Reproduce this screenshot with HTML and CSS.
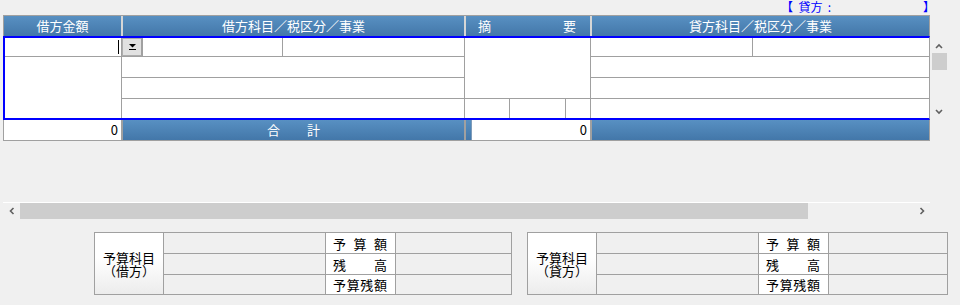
FILE: index.html
```html
<!DOCTYPE html>
<html lang="ja">
<head>
    <meta charset="UTF-8">
    <title>仕訳入力</title>
    <link rel="stylesheet" href="styles.css">
</head>
<body>

    <div class="note">
        <div class="note-in"><span>【&nbsp;&nbsp;貸方&nbsp;&nbsp;:</span><span>】</span></div>
    </div>

    <div class="sheet">
        <div class="head">
            <div class="hc">借方金額</div>
            <div class="hc">借方科目／税区分／事業</div>
            <div class="hc hc-spread"><span>摘</span><span>要</span></div>
            <div class="hc">貸方科目／税区分／事業</div>
        </div>

        <div class="body-row">
            <div class="lines">
                <div class="cell amt-input"><span class="caret"></span></div>
                <div class="cell amt-rest"></div>

                <div class="cell split dr-first">
                    <button class="drop">
                        <svg width="9" height="8" viewBox="0 0 9 8"><path d="M1 1h7L4.5 4.5z" fill="#000"/><rect x="1" y="6" width="7" height="1" fill="#000"/></svg>
                    </button>
                    <div class="cell dr-code"></div>
                    <div class="cell dr-tax"></div>
                </div>
                <div class="cell dr-r2"></div>
                <div class="cell dr-r3"></div>
                <div class="cell dr-r4"></div>

                <div class="cell memo"></div>
                <div class="cell split memo-foot">
                    <div class="cell w44"></div>
                    <div class="cell w55"></div>
                    <div class="cell w24"></div>
                </div>

                <div class="cell split cr-first">
                    <div class="cell cr-code"></div>
                    <div class="cell cr-tax"></div>
                </div>
                <div class="cell cr-r2"></div>
                <div class="cell cr-r3"></div>
                <div class="cell cr-r4"></div>
            </div>

            <div class="vscroll">
                <svg class="arrow" width="8" height="6" viewBox="0 0 8 6"><path d="M1 5L4 2L7 5" fill="none" stroke="#606060" stroke-width="1.6"/></svg>
                <div class="vthumb"></div>
                <div class="vspace"></div>
                <svg class="arrow" width="8" height="6" viewBox="0 0 8 6"><path d="M1 1L4 4L7 1" fill="none" stroke="#606060" stroke-width="1.6"/></svg>
            </div>
        </div>

        <div class="total">
            <div class="tc amount">0</div>
            <div class="tc band band-spread"><span>合</span><span>計</span></div>
            <div class="tc band"><div class="amount amount-box">0</div></div>
            <div class="tc band"></div>
        </div>
    </div>

    <div class="hscroll">
        <div class="harrow">
            <svg width="6" height="8" viewBox="0 0 6 8"><path d="M4.5 1L1.5 4L4.5 7" fill="none" stroke="#606060" stroke-width="1.6"/></svg>
        </div>
        <div class="hthumb"></div>
        <div class="hspace"></div>
        <div class="harrow">
            <svg width="6" height="8" viewBox="0 0 6 8"><path d="M1.5 1L4.5 4L1.5 7" fill="none" stroke="#606060" stroke-width="1.6"/></svg>
        </div>
    </div>

    <div class="budget">
        <div class="panel panel-dr">
            <div class="p-title"><div>予算科目</div><div>（借方）</div></div>
            <div class="p-val"></div>
            <div class="p-label"><span>予</span><span>算</span><span>額</span></div>
            <div class="p-val"></div>
            <div class="p-val"></div>
            <div class="p-label"><span>残</span><span>高</span></div>
            <div class="p-val"></div>
            <div class="p-val"></div>
            <div class="p-label"><span>予</span><span>算</span><span>残</span><span>額</span></div>
            <div class="p-val"></div>
        </div>
        <div class="panel panel-cr">
            <div class="p-title"><div>予算科目</div><div>（貸方）</div></div>
            <div class="p-val"></div>
            <div class="p-label"><span>予</span><span>算</span><span>額</span></div>
            <div class="p-val"></div>
            <div class="p-val"></div>
            <div class="p-label"><span>残</span><span>高</span></div>
            <div class="p-val"></div>
            <div class="p-val"></div>
            <div class="p-label"><span>予</span><span>算</span><span>残</span><span>額</span></div>
            <div class="p-val"></div>
        </div>
    </div>

</body>
</html>
```

FILE: styles.css
```css
* {
    box-sizing: border-box;
}

body {
    margin: 0;
    background-color: #f0f0f0;
    font-family: "Noto Sans CJK JP", "DejaVu Sans", sans-serif;
    font-size: 13px;
    color: #000;
}

/* top note */
.note {
    display: flex;
    height: 15px;
}

.note-in {
    display: flex;
    justify-content: space-between;
    width: 154px;
    height: 14px;
    margin-left: 781px;
    line-height: 13px;
    font-size: 12px;
    color: #0000ff;
}

/* grid */
.sheet {
    margin-left: 3px;
}

.head {
    display: grid;
    grid-template-columns: 117px 341px 124px 337px;
    column-gap: 2px;
    width: 927px;
    height: 21px;
    border: 1px solid #a0a0a0;
    border-bottom: none;
    background-color: #d6d6d6;
}

.hc {
    background: linear-gradient(#5890c2, #4377a9);
    color: #fff;
    text-align: center;
    line-height: 20px;
    white-space: nowrap;
}

.hc-spread {
    display: flex;
    justify-content: space-between;
    padding: 0 14px 0 12px;
}

.body-row {
    display: flex;
}

.lines {
    display: grid;
    grid-template-columns: 116px 342px 125px 338px;
    grid-template-rows: 18px 20px 20px 19px;
    gap: 1px;
    width: 927px;
    height: 84px;
    background-color: #a0a0a0;
    border-top: 2px solid #0000ff;
    border-bottom: 2px solid #0000ff;
    border-left: 2px solid #0000ff;
    border-right: 1px solid #a0a0a0;
}

.cell {
    background-color: #fff;
}

.amt-input {
    grid-column: 1;
    grid-row: 1;
    display: flex;
    justify-content: flex-end;
    align-items: center;
    padding-right: 2px;
}

.caret {
    width: 1px;
    height: 14px;
    background-color: #000;
}

.amt-rest {
    grid-column: 1;
    grid-row: 2 / 5;
}

.split {
    display: flex;
    gap: 1px;
    background-color: #a0a0a0;
}

.dr-first { grid-column: 2; grid-row: 1; }
.dr-r2 { grid-column: 2; grid-row: 2; }
.dr-r3 { grid-column: 2; grid-row: 3; }
.dr-r4 { grid-column: 2; grid-row: 4; }

.drop {
    width: 20px;
    padding: 0;
    border: 1px solid #adadad;
    border-right-color: #a0a0a0;
    background-color: #e1e1e1;
    display: flex;
    align-items: center;
    justify-content: center;
}

.dr-code {
    width: 139px;
}

.dr-tax {
    flex: 1;
}

.memo {
    grid-column: 3;
    grid-row: 1 / 4;
}

.memo-foot {
    grid-column: 3;
    grid-row: 4;
}

.w44 { width: 44px; }
.w55 { width: 55px; }
.w24 { flex: 1; }

.cr-first { grid-column: 4; grid-row: 1; }
.cr-r2 { grid-column: 4; grid-row: 2; }
.cr-r3 { grid-column: 4; grid-row: 3; }
.cr-r4 { grid-column: 4; grid-row: 4; }

.cr-code {
    width: 161px;
}

.cr-tax {
    flex: 1;
}

/* vertical scrollbar */
.vscroll {
    width: 17px;
    display: flex;
    flex-direction: column;
    align-items: center;
    padding-top: 7px;
}

.vscroll .arrow {
    display: block;
    margin-left: 1px;
}

.vthumb {
    width: 15px;
    height: 17px;
    margin-top: 4px;
    margin-left: 1px;
    background-color: #cdcdcd;
}

.vspace {
    height: 39px;
}

/* total row */
.total {
    display: grid;
    grid-template-columns: 117px 341px 124px 337px;
    column-gap: 2px;
    width: 927px;
    height: 21px;
    border: 1px solid #a0a0a0;
    border-top: none;
    background-color: #a0a0a0;
}

.tc {
    line-height: 20px;
}

.amount {
    background-color: #fff;
    text-align: right;
    padding-right: 3px;
}

.band {
    background: linear-gradient(#5890c2, #4377a9);
    color: #fff;
    padding-left: 5px;
}

.band-spread {
    display: flex;
    justify-content: center;
    gap: 27px;
    padding-left: 0;
}

.amount-box {
    height: 20px;
    color: #000;
    border-left: 1px solid #7f9cba;
}

/* horizontal scrollbar */
.hscroll {
    display: flex;
    width: 927px;
    height: 17px;
    margin: 61px 0 0 3px;
    border-top: 1px solid #fff;
}

.harrow {
    width: 17px;
    display: flex;
    align-items: center;
    justify-content: center;
}

.hthumb {
    width: 788px;
    background-color: #cdcdcd;
}

.hspace {
    flex: 1;
}

/* budget panels */
.budget {
    display: flex;
    gap: 15px;
    margin-top: 13px;
    padding-left: 94px;
}

.panel {
    display: grid;
    grid-template-rows: 20px 20px 19px;
    gap: 1px;
    height: 63px;
    border: 1px solid #a0a0a0;
    background-color: #a0a0a0;
}

.panel-dr {
    grid-template-columns: 68px 161px 69px 115px;
}

.panel-cr {
    grid-template-columns: 68px 161px 69px 118px;
}

.p-title {
    grid-row: 1 / 4;
    background: linear-gradient(#ffffff 40%, #ececec);
    display: flex;
    flex-direction: column;
    align-items: center;
    justify-content: center;
    text-align: center;
    line-height: 13px;
    padding-top: 1px;
}

.p-val {
    background-color: #f0f0f0;
}

.p-label {
    background-color: #fff;
    display: flex;
    justify-content: space-between;
    align-items: center;
    padding: 0 8px 0 7px;
    line-height: 19px;
}
```
